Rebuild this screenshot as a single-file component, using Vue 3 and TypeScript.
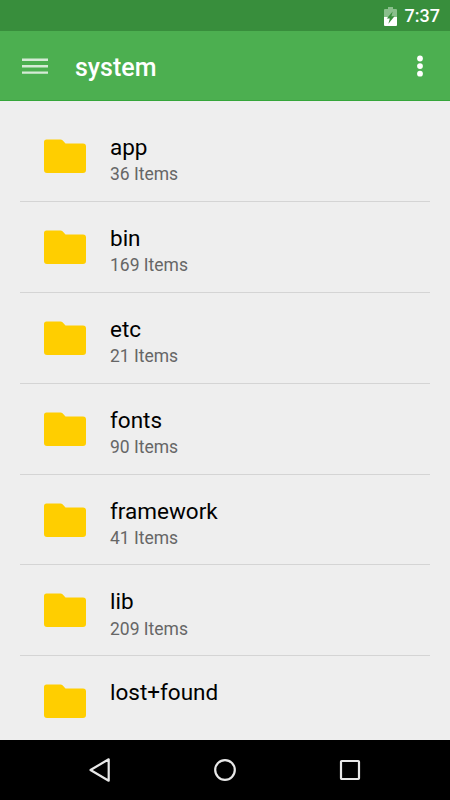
<script setup lang="ts">
interface Folder {
  name: string
  items: number
}

const folders: Folder[] = [
  { name: 'app', items: 36 },
  { name: 'bin', items: 169 },
  { name: 'etc', items: 21 },
  { name: 'fonts', items: 90 },
  { name: 'framework', items: 41 },
  { name: 'lib', items: 209 },
  { name: 'lost+found', items: 0 },
]
</script>

<template>
  <div class="screen">
    <div class="status">
      <svg class="battery" width="13" height="19" viewBox="0 0 13 19">
        <path d="M4 0h5v2h3q1 0 1 1v7H0V3q0-1 1-1h3z" fill="#8abf8c" />
        <path d="M0 10h13v8q0 1-1 1H1q-1 0-1-1z" fill="#fff" />
        <path d="M8.7 4.4L2.8 11.6h3L4.4 16.8 10.5 9.3H7.4z" fill="#388e3c" />
      </svg>
      <span class="clock">7:37</span>
    </div>
    <header class="toolbar">
      <svg class="menu" width="26" height="16" viewBox="0 0 26 16">
        <path d="M0 1.8h26M0 8.2h26M0 14.6h26" stroke="#d5ebd6" stroke-width="2.4" />
      </svg>
      <h1 class="title">system</h1>
      <svg class="more" width="6" height="22" viewBox="0 0 6 22">
        <circle cx="3" cy="3.5" r="2.9" />
        <circle cx="3" cy="11.1" r="2.9" />
        <circle cx="3" cy="18.7" r="2.9" />
      </svg>
    </header>
    <main class="list">
      <div v-for="folder in folders" :key="folder.name" class="row">
        <svg class="folder" width="42" height="34" viewBox="0 -.4 42 34">
          <path d="M2.5 0H16.5Q17.7 0 18.5 .8L21.5 4.1H39Q42 4.1 42 7V30.5Q42 33.5 39 33.5H3Q0 33.5 0 30.5V2.5Q0 0 2.5 0Z" />
        </svg>
        <div class="labels">
          <div class="name">{{ folder.name }}</div>
          <div v-if="folder.items" class="count">{{ folder.items }} Items</div>
        </div>
      </div>
    </main>
    <nav class="navbar">
      <svg width="22" height="26" viewBox="0 0 22 26">
        <path d="M19.7 2.3V23.7L1.5 13Z" />
      </svg>
      <svg width="24" height="24" viewBox="0 0 24 24">
        <circle cx="12" cy="12" r="9.8" />
      </svg>
      <svg width="22" height="22" viewBox="0 0 22 22">
        <rect x="2" y="2" width="18" height="18" rx=".7" />
      </svg>
    </nav>
  </div>
</template>

<style>
body {
  margin: 0;
  overflow: hidden;
}
</style>

<style scoped>
.screen {
  width: 450px;
  height: 800px;
  display: flex;
  flex-direction: column;
  overflow: hidden;
  background: #eeeeee;
  font-family: Roboto, sans-serif;
}

.status {
  height: 31px;
  flex: none;
  box-sizing: border-box;
  display: flex;
  justify-content: flex-end;
  align-items: center;
  gap: 8px;
  padding: 1px 10px 0 0;
  background: #388e3c;
}

.clock {
  font-size: 18px;
  line-height: 22px;
  font-weight: 500;
  color: #fff;
}

.toolbar {
  height: 70px;
  flex: none;
  box-sizing: border-box;
  display: flex;
  align-items: center;
  padding: 0 27px 0 22px;
  background: #4caf50;
  border-bottom: 1px solid #35a53a;
}

.title {
  flex: 1;
  margin: 4px 0 0 27px;
  font-size: 25px;
  line-height: 30px;
  font-weight: 500;
  color: #fff;
}

.more {
  fill: #fff;
}

.list {
  flex: 1;
  min-height: 0;
  overflow: hidden;
  padding: 10.3px 20px 0;
}

.row {
  height: 90.83px;
  box-sizing: border-box;
  display: flex;
  align-items: flex-start;
  padding-left: 24px;
  border-bottom: 1px solid #d4d4d4;
}

.folder {
  flex: none;
  margin-top: 28px;
  fill: #ffce00;
}

.labels {
  margin: 21.9px 0 0 24px;
}

.name {
  font-size: 22.5px;
  line-height: 28px;
  color: #000;
}

.count {
  margin-top: 1.2px;
  font-size: 17.5px;
  line-height: 24px;
  color: #666;
}

.navbar {
  height: 60px;
  flex: none;
  box-sizing: border-box;
  display: flex;
  align-items: center;
  justify-content: space-between;
  padding: 0 89px;
  background: #000;
  fill: none;
  stroke: #e8e8e8;
  stroke-width: 2.2;
  stroke-linejoin: round;
}
</style>
